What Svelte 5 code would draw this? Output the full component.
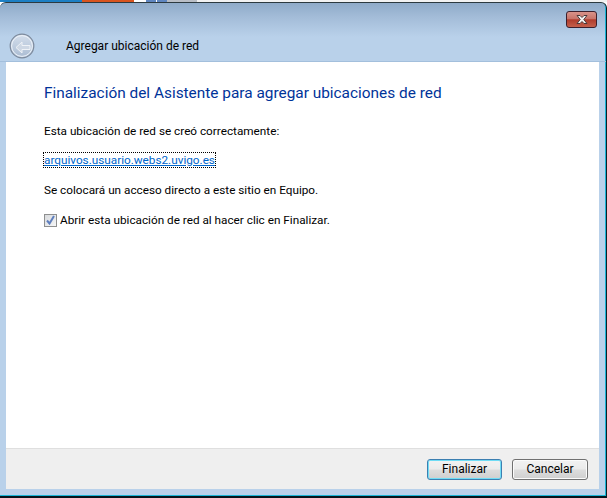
<script>
  const actions = ['Finalizar', 'Cancelar'];
</script>

<div class="strip">
  <span class="s1"></span><span class="s2"></span><span class="s3"></span><span class="s4"></span><span class="s5"></span><span class="s4"></span><span class="s6"></span>
</div>
<div class="window">
  <div class="frame-top">
    <button class="close" aria-label="Cerrar">
      <svg width="14" height="11" viewBox="0 0 14 11">
        <path d="M2 1.5h3l2 2 2-2h3l-3.2 4 3.2 4H9l-2-2-2 2H2l3.2-4z" fill="#f4f4f4" stroke="#4a3a3a" stroke-width="1"/>
      </svg>
    </button>
  </div>
  <div class="nav">
    <svg class="back" width="26" height="26" viewBox="0 0 26 26">
      <defs>
        <linearGradient id="backfill" x1="0" y1="0" x2="0" y2="1">
          <stop offset="0" stop-color="#d5dfec"/>
          <stop offset="1" stop-color="#a9bbd2"/>
        </linearGradient>
      </defs>
      <circle cx="13" cy="13" r="11.8" fill="url(#backfill)" stroke="#7d8a9c" stroke-width="1.2"/>
      <circle cx="13" cy="13" r="10.4" fill="none" stroke="#eef3f9" stroke-width="1"/>
      <path d="M7 14.5 13 9v3.5h8v4h-8V20z" fill="#cdd7e4" stroke="#eef2f7" stroke-width="1"/>
    </svg>
    <span class="title">Agregar ubicación de red</span>
  </div>
  <main>
    <div class="body">
      <h1>Finalización del Asistente para agregar ubicaciones de red</h1>
      <p class="first">Esta ubicación de red se creó correctamente:</p>
      <p class="link-row"><a href="#top">arquivos.usuario.webs2.uvigo.es</a></p>
      <p class="shortcut">Se colocará un acceso directo a este sitio en Equipo.</p>
      <label class="check">
        <span class="box">
          <svg width="9" height="10" viewBox="0 0 9 10">
            <path d="M1 5.5 3.5 8.5 8 1" fill="none" stroke="#5f7fbe" stroke-width="2"/>
          </svg>
        </span>
        Abrir esta ubicación de red al hacer clic en Finalizar.
      </label>
    </div>
    <footer>
      {#each actions as action, i}
        <button class="btn" class:primary={i === 0}>{action}</button>
      {/each}
    </footer>
  </main>
  <div class="frame-bottom"></div>
</div>

<style>
  :global(body) {
    background: #fff;
    font-family: Roboto, "Noto Sans", sans-serif;
    font-size: 11.75px;
  }
  .strip {
    display: flex;
    height: 2px;
    background: #f2f2f2;
  }
  .s1 { width: 82px; background: #1c7fc4; }
  .s2 { width: 52px; background: #d9541e; }
  .s3 { width: 12px; background: #fff; }
  .s4 { width: 10px; background: #5f86c0; }
  .s5 { width: 1px; background: #fff; }
  .s6 { width: 30px; background: #b9bec6; }
  .window {
    width: 607px;
    height: 496px;
    box-sizing: border-box;
    display: flex;
    flex-direction: column;
    border-top: 1px solid #2c3a40;
    border-right: 1px solid #0c1e26;
    border-bottom: 2px solid #05141c;
    border-radius: 6px 6px 0 0;
    background: linear-gradient(#8fabc9 0, #a3bcd8 14px, #b9d1ea 34px, #b9d1ea 100%);
    box-shadow: inset -1px -1px 0 #19b5d6;
  }
  .frame-top {
    height: 27px;
    display: flex;
    justify-content: flex-end;
    padding-right: 9px;
  }
  .close {
    width: 31px;
    height: 17px;
    margin-top: 8px;
    padding: 0;
    display: flex;
    align-items: center;
    justify-content: center;
    border: 1px solid #3c1f2c;
    border-radius: 3px;
    background: linear-gradient(#d9938a 0, #c8746a 45%, #b03c2c 52%, #c4604c 100%);
  }
  .nav {
    height: 32px;
    display: flex;
    align-items: center;
    padding-left: 9px;
    gap: 31px;
    border-bottom: 1px solid #a3bfdc;
    box-sizing: border-box;
  }
  .title {
    color: #000;
    font-size: 12px;
  }
  main {
    flex: 1;
    margin: 0 7px 0 6px;
    display: flex;
    flex-direction: column;
    background: #fff;
  }
  .body {
    flex: 1;
    padding: 21px 38px 0;
  }
  h1 {
    margin: 0;
    font-size: 15.4px;
    font-weight: 400;
    line-height: 20px;
    color: #003399;
  }
  p {
    margin: 0;
    line-height: 16px;
    color: #000;
  }
  .first { margin-top: 20px; }
  .link-row { margin-top: 13px; }
  .shortcut { margin-top: 14px; }
  a {
    color: #0066cc;
    outline: 1px dotted #000;
    outline-offset: 0;
  }
  .check {
    margin-top: 14px;
    display: flex;
    align-items: center;
    gap: 3px;
    line-height: 16px;
  }
  .box {
    width: 11px;
    height: 11px;
    display: flex;
    align-items: center;
    justify-content: center;
    border: 1px solid #8e8f8f;
    background: linear-gradient(135deg, #d8dadd, #f5f6f7);
  }
  footer {
    height: 41px;
    box-sizing: border-box;
    display: flex;
    justify-content: flex-end;
    align-items: center;
    gap: 10px;
    padding-right: 11px;
    background: #efefef;
    border-top: 1px solid #dfdfdf;
  }
  .btn {
    width: 76px;
    height: 21px;
    padding: 0;
    font: inherit;
    font-size: 12px;
    color: #000;
    border: 1px solid #707070;
    border-radius: 3px;
    background: linear-gradient(#f2f2f2 0, #ebebeb 48%, #dddddd 52%, #cfcfcf 100%);
    box-shadow: inset 0 0 0 1px #fbfbfb;
  }
  .primary {
    width: 75px;
    border-color: #3c7fb1;
    box-shadow: inset 0 0 0 1px #6fdcf5;
  }
  .frame-bottom {
    height: 7px;
  }
</style>
